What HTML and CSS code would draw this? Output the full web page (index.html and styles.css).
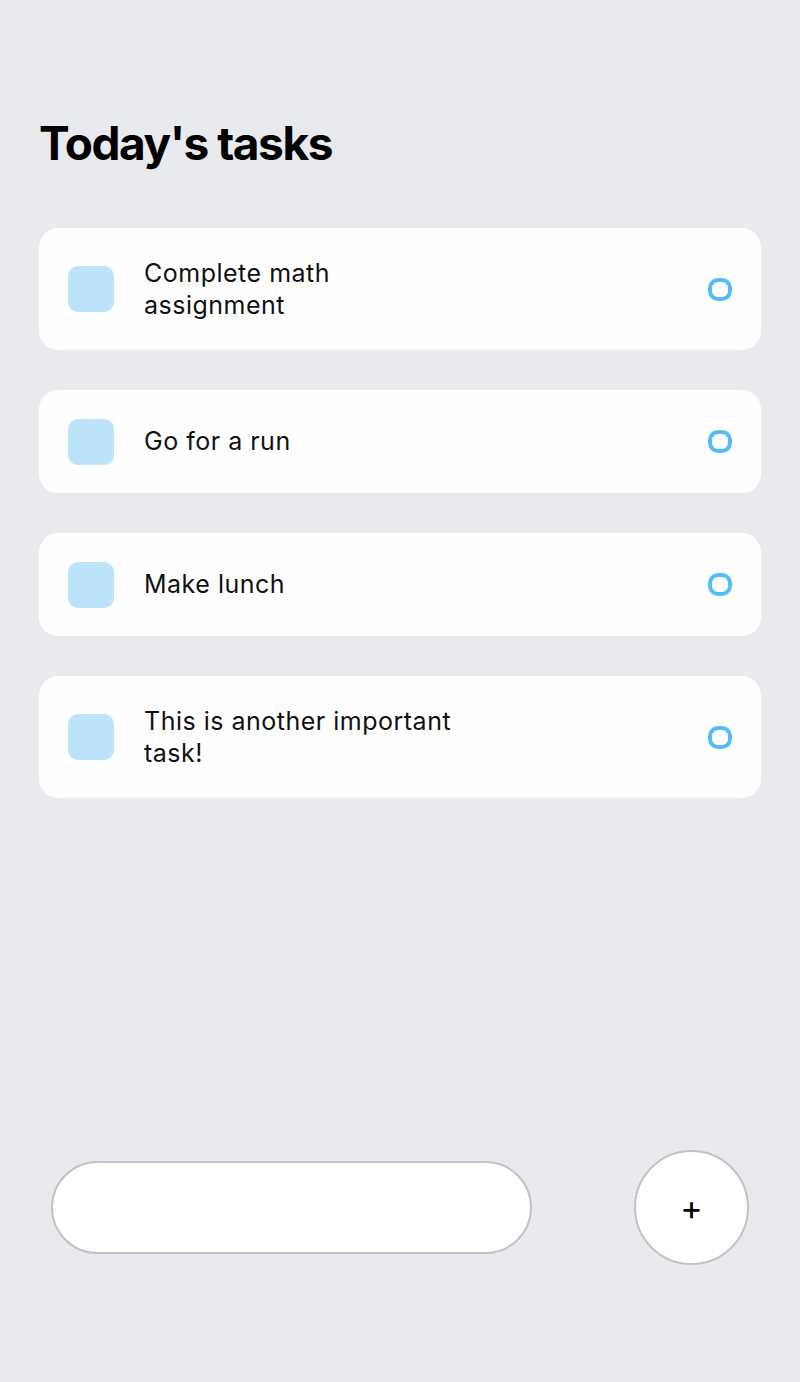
FILE: index.html
```html
<!DOCTYPE html>
<html lang="en">
<head>
<meta charset="utf-8">
<title>Today's tasks</title>
<link rel="stylesheet" href="styles.css">
</head>
<body>
<div class="app">
  <section class="tasks">
    <h1 class="title">Today's tasks</h1>
    <div class="items">
      <div class="item">
        <div class="item-left">
          <div class="square"></div>
          <p class="item-text">Complete math assignment</p>
        </div>
        <div class="circular"></div>
      </div>
      <div class="item">
        <div class="item-left">
          <div class="square"></div>
          <p class="item-text">Go for a run</p>
        </div>
        <div class="circular"></div>
      </div>
      <div class="item">
        <div class="item-left">
          <div class="square"></div>
          <p class="item-text">Make lunch</p>
        </div>
        <div class="circular"></div>
      </div>
      <div class="item">
        <div class="item-left">
          <div class="square"></div>
          <p class="item-text">This is another important task!</p>
        </div>
        <div class="circular"></div>
      </div>
    </div>
  </section>
  <div class="write-wrapper">
    <input class="task-input" type="text" aria-label="Write a task">
    <button class="add-btn" type="button">+</button>
  </div>
</div>
</body>
</html>
```

FILE: styles.css
```css
* { box-sizing: border-box; }
html, body {
  margin: 0;
  padding: 0;
  background: #e8eaed;
}
body {
  font-family: Inter, "Noto Sans", sans-serif;
  color: #111;
}
.app {
  height: 1382px;
  display: flex;
  flex-direction: column;
}
.tasks {
  padding: 115px 39px 0;
}
.title {
  margin: 0;
  font-size: 46px;
  line-height: 56px;
  font-weight: 700;
  color: #000;
  letter-spacing: -1.45px;
}
.items {
  margin-top: 57px;
  display: flex;
  flex-direction: column;
  gap: 40px;
}
.item {
  background: #fefeff;
  border-radius: 19px;
  padding: 28.5px 29px;
  display: flex;
  align-items: center;
  justify-content: space-between;
}
.item-left {
  display: flex;
  align-items: center;
}
.square {
  width: 46px;
  height: 46px;
  flex: none;
  background: #bbe4fb;
  border-radius: 10px;
  margin-right: 30px;
}
.item-text {
  margin: 0;
  max-width: 325px;
  font-size: 25px;
  line-height: 32.5px;
  letter-spacing: 0.5px;
  color: #111;
}
.circular {
  width: 24px;
  height: 23px;
  flex: none;
  border: 4px solid #55bcf6;
  border-radius: 10px;
}
.write-wrapper {
  margin-top: auto;
  padding-bottom: 117px;
  display: flex;
  align-items: center;
  justify-content: space-around;
}
.task-input {
  width: 481px;
  height: 93px;
  border: 2px solid #c3c2c6;
  border-radius: 60px;
  background: #fff;
  padding: 0 29px;
  font-family: inherit;
  font-size: 24px;
  outline: none;
}
.add-btn {
  width: 115px;
  height: 115px;
  border-radius: 50%;
  border: 2px solid #c3c2c6;
  background: #fff;
  font-family: Inter, "Noto Sans", sans-serif;
  font-weight: 400;
  font-size: 34px;
  line-height: 1;
  color: #000;
  padding: 0;
  cursor: pointer;
}
```
